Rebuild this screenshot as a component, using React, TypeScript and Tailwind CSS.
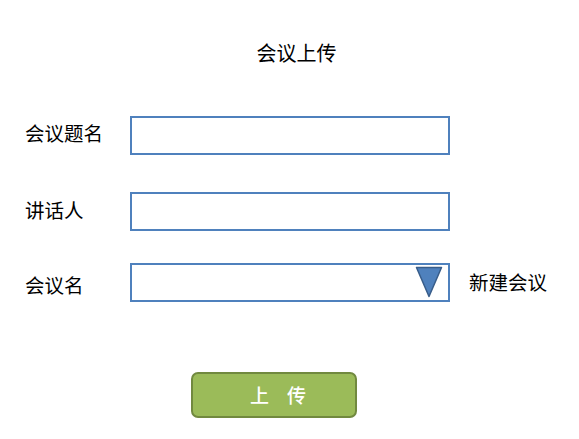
import React from 'react';

const font = { fontFamily: '"Microsoft YaHei", "Noto Sans CJK SC", sans-serif' };

const Field: React.FC<{ label: string; labelShift?: string; children?: React.ReactNode; extra?: React.ReactNode }> = ({ label, labelShift = '', children, extra }) => (
  <div className="flex items-center h-[39px]">
    <div className={`w-[105px] text-[19.5px] leading-[20px] text-black ${labelShift}`}>{label}</div>
    <div className="w-[320px] h-[39px] border-2 border-[#4f81bd] bg-white flex items-start justify-end pr-[5px]">
      {children}
    </div>
    {extra}
  </div>
);

export default function App() {
  return (
    <div className="w-[579px] h-[439px] bg-white overflow-hidden" style={font}>
      <div className="flex justify-center pl-[14px] pt-[43px] text-[20px] leading-[20px] text-black">会议上传</div>

      <div className="pl-[25px] mt-[53px] flex flex-col">
        <Field label="会议题名" labelShift="-mt-[5px]" />
        <div className="h-[37px]" />
        <Field label="讲话人" labelShift="-mt-[3px]" />
        <div className="h-[32px]" />
        <Field
          label="会议名"
          labelShift="mt-[5px]"
          extra={<div className="ml-[19px] text-[19.5px] leading-[20px] text-black -mt-[2px]">新建会议</div>}
        >
          <svg width="28" height="32" viewBox="0 0 28 32" className="mt-[1px]">
            <polygon points="1.5,1.5 26.5,1.5 14,30.5" fill="#4f81bd" stroke="#385d8a" strokeWidth="1.5" strokeLinejoin="round" />
          </svg>
        </Field>
      </div>

      <div className="mt-[70px] ml-[191px]">
        <button className="w-[166px] h-[46px] rounded-[7px] bg-[#9bbb59] border-2 border-[#71893f] text-white text-[19px] font-medium flex items-center justify-center gap-[18px] pl-[8px]">
          <span>上</span>
          <span>传</span>
        </button>
      </div>
    </div>
  );
}
